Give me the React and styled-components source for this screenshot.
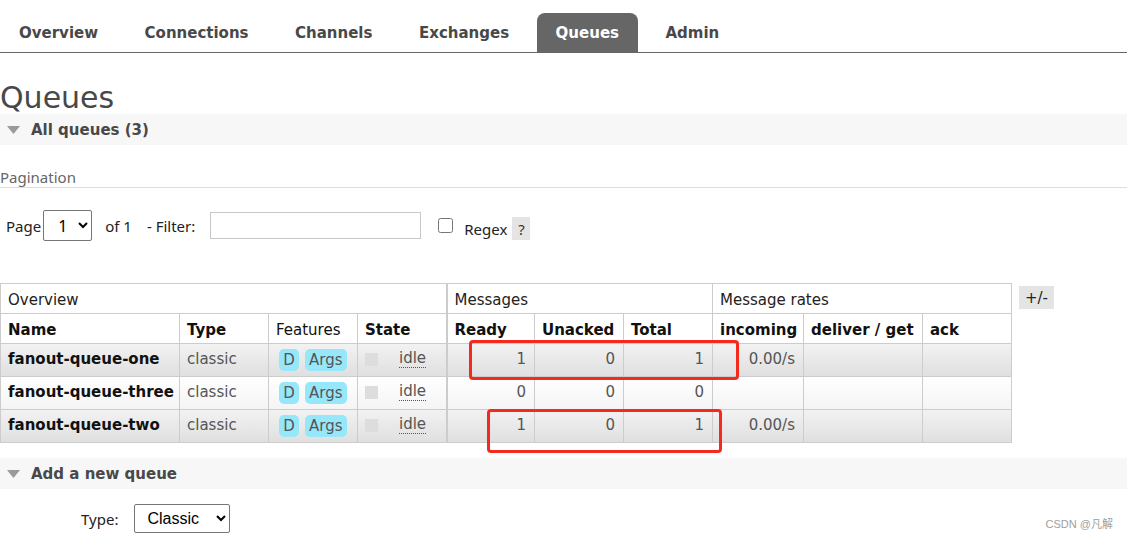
import React from 'react';
import styled, {createGlobalStyle} from 'styled-components';

// Global

const GlobalStyle = createGlobalStyle`
    body {
        margin: 0;
        font-family: "DejaVu Sans", Verdana, sans-serif;
        font-size: 15px;
        color: #484848;
        background: #fff;
    }
`

// Styled Components

const Page = styled.div`
    position: relative;
    width: 1127px;
    height: 540px;
    overflow: hidden;
`

const Nav = styled.nav`
    display: flex;
    gap: 8.5px;
    height: 39px;
    padding-top: 13px;
    border-bottom: 1px solid #666;
`

const Tab = styled.a`
    display: flex;
    align-items: center;
    padding: 0 19px;
    font-weight: bold;
    font-size: 15px;
    color: ${p => p.active ? '#fff' : '#484848'};
    background: ${p => p.active ? '#666' : 'transparent'};
    border-radius: 8px 8px 0 0;
    text-decoration: none;
`

const Title = styled.h1`
    margin: 29px 0 0;
    font-size: 30px;
    line-height: 32px;
    font-weight: normal;
    color: #484848;
`

const SectionHeader = styled.div`
    display: flex;
    align-items: center;
    height: 31px;
    margin-top: ${p => p.top || 0}px;
    padding-left: 7px;
    background: #f7f7f7;
    font-weight: bold;
    font-size: 15px;
    color: #484848;

    svg {
        margin-right: 11px;
    }
`

const Legend = styled.div`
    padding-top: 22px;
    font-family: "Noto Sans", "Open Sans", sans-serif;
    font-size: 15px;
    line-height: 20px;
    color: #666;
    border-bottom: 1px solid #ddd;
`

const Controls = styled.div`
    display: flex;
    align-items: center;
    height: 31px;
    margin-top: 22px;
    padding-left: 6px;
    font-family: "Noto Sans", "Open Sans", sans-serif;
    font-size: 15px;
    color: #222;
`

const Label = styled.span`
    margin-left: ${p => p.ml || 0}px;
    margin-top: ${p => p.mt || 0}px;
`

const Select = styled.select`
    box-sizing: border-box;
    width: ${p => p.w}px;
    height: ${p => p.h}px;
    margin-left: ${p => p.ml || 0}px;
    padding: 0 4px 0 ${p => p.pl || 8}px;
    font-family: ${p => p.arial ? '"Liberation Sans", Arial' : '"Noto Sans"'}, sans-serif;
    font-size: 16px;
    color: #000;
    background: #fff;
    border: 1px solid #767676;
    border-radius: 2px;
`

const TextInput = styled.input`
    box-sizing: border-box;
    width: 211px;
    height: 27px;
    margin-left: 15px;
    border: 1px solid #c8c8c8;
    border-radius: 0;
`

const CheckBox = styled.input`
    width: 15px;
    height: 15px;
    margin: 0 0 0 17px;
`

const HelpBox = styled.span`
    display: inline-flex;
    align-items: center;
    justify-content: center;
    width: 18px;
    height: 23px;
    margin-left: 5px;
    margin-top: 6px;
    background: #e4e4e4;
    color: #333;
`

const TableArea = styled.div`
    display: flex;
    align-items: flex-start;
    gap: 7px;
    margin-top: 42px;
`

const TableWrap = styled.div`
    position: relative;
`

const Table = styled.table`
    border-collapse: collapse;
    table-layout: fixed;
    width: 1011px;
    font-size: 15px;

    th, td {
        border: 1px solid #ccc;
        padding: 0 7px;
        text-align: left;
        white-space: nowrap;
        overflow: hidden;
    }

    thead tr {
        height: 30px;
    }

    thead th {
        padding-top: 2px;
    }

    tbody tr {
        height: 33px;
        background: linear-gradient(#f2f2f2, #dfdfdf);
    }

    tbody tr:nth-child(2) {
        background: linear-gradient(#ffffff, #f4f4f4);
    }

    tbody td {
        padding-bottom: 2px;
    }

    .group {
        border-left: 2px solid #ccc;
    }
`

const GroupTh = styled.th`
    font-weight: normal;
    color: #222;
`

const ColTh = styled.th`
    font-weight: ${p => p.light ? 'normal' : 'bold'};
    color: #111;
`

const NameCell = styled.td`
    font-weight: bold;
    color: #111;
`

const PlainCell = styled.td`
    color: #555;
`

const NumCell = styled.td`
    color: #555;
    text-align: right !important;
    padding-right: 8px !important;
`

const Badges = styled.div`
    display: flex;
    gap: 6px;
    margin-left: 3px;
    margin-top: 2px;
`

const Badge = styled.span`
    display: inline-flex;
    align-items: center;
    justify-content: center;
    height: 22px;
    padding: 0 ${p => p.wide ? 4 : 3}px;
    min-width: 14px;
    background: #97e7fb;
    border-radius: 5px;
    color: #555;
`

const StateBox = styled.div`
    display: flex;
    align-items: center;
`

const StateSquare = styled.span`
    width: 13px;
    height: 13px;
    background: #ddd;
    margin-right: 21px;
`

const Idle = styled.abbr`
    text-decoration: none;
    border-bottom: 1px dotted #555;
    color: #555;
    line-height: 17px;
`

const ToggleButton = styled.span`
    display: inline-flex;
    align-items: center;
    justify-content: center;
    width: 35px;
    height: 23px;
    margin-top: 3px;
    background: #e4e4e4;
    color: #222;
`

const Mark = styled.div`
    position: absolute;
    left: ${p => p.x}px;
    top: ${p => p.y}px;
    width: ${p => p.w}px;
    height: ${p => p.h}px;
    box-sizing: border-box;
    border: 3px solid #f52a1e;
    border-radius: 4px;
    pointer-events: none;
`

const TypeRow = styled.div`
    display: flex;
    align-items: center;
    margin-top: 15px;
    padding-left: 81px;
    font-family: "Noto Sans", "Open Sans", sans-serif;
    font-size: 15px;
    color: #222;
`

const Watermark = styled.div`
    position: absolute;
    right: 14px;
    bottom: 9px;
    font-family: "Liberation Sans", "Noto Sans CJK SC", sans-serif;
    font-size: 11px;
    color: #a0a0a0;
`

// Data

const tabs = ['Overview', 'Connections', 'Channels', 'Exchanges', 'Queues', 'Admin'];

const queues = [
    {name: 'fanout-queue-one', ready: 1, unacked: 0, total: 1, rate: '0.00/s'},
    {name: 'fanout-queue-three', ready: 0, unacked: 0, total: 0, rate: ''},
    {name: 'fanout-queue-two', ready: 1, unacked: 0, total: 1, rate: '0.00/s'},
];

const widths = [179, 89, 89, 89, 88, 89, 89, 91, 119, 89];

const Triangle = () => (
    <svg width="13" height="8" viewBox="0 0 13 8">
        <path d="M0 0 H13 L6.5 8 Z" fill="#9a9a9a"/>
    </svg>
)

// App

const App = () => (
    <Page>
        <GlobalStyle/>
        <Nav>
            {tabs.map(t => (
                <Tab key={t} active={t === 'Queues'}>{t}</Tab>
            ))}
        </Nav>
        <Title>Queues</Title>
        <SectionHeader>
            <Triangle/>
            All queues (3)
        </SectionHeader>
        <Legend>Pagination</Legend>
        <Controls>
            <Label>Page</Label>
            <Select w={49} h={31} ml={2} pl={10}>
                <option>1</option>
            </Select>
            <Label ml={13}>of 1</Label>
            <Label ml={15}>- Filter:</Label>
            <TextInput type="text"/>
            <CheckBox type="checkbox"/>
            <Label ml={11} mt={6}>Regex</Label>
            <HelpBox>?</HelpBox>
        </Controls>
        <TableArea>
            <TableWrap>
                <Table>
                    <colgroup>
                        {widths.map((w, i) => <col key={i} style={{width: w}}/>)}
                    </colgroup>
                    <thead>
                        <tr>
                            <GroupTh colSpan={4}>Overview</GroupTh>
                            <GroupTh colSpan={3} className="group">Messages</GroupTh>
                            <GroupTh colSpan={3}>Message rates</GroupTh>
                        </tr>
                        <tr>
                            <ColTh>Name</ColTh>
                            <ColTh>Type</ColTh>
                            <ColTh light>Features</ColTh>
                            <ColTh>State</ColTh>
                            <ColTh className="group">Ready</ColTh>
                            <ColTh>Unacked</ColTh>
                            <ColTh>Total</ColTh>
                            <ColTh>incoming</ColTh>
                            <ColTh>deliver / get</ColTh>
                            <ColTh>ack</ColTh>
                        </tr>
                    </thead>
                    <tbody>
                        {queues.map(q => (
                            <tr key={q.name}>
                                <NameCell>{q.name}</NameCell>
                                <PlainCell>classic</PlainCell>
                                <PlainCell>
                                    <Badges>
                                        <Badge>D</Badge>
                                        <Badge wide>Args</Badge>
                                    </Badges>
                                </PlainCell>
                                <PlainCell>
                                    <StateBox>
                                        <StateSquare/>
                                        <Idle>idle</Idle>
                                    </StateBox>
                                </PlainCell>
                                <NumCell className="group">{q.ready}</NumCell>
                                <NumCell>{q.unacked}</NumCell>
                                <NumCell>{q.total}</NumCell>
                                <NumCell>{q.rate}</NumCell>
                                <NumCell/>
                                <NumCell/>
                            </tr>
                        ))}
                    </tbody>
                </Table>
                <Mark x={469} y={57} w={270} h={40}/>
                <Mark x={487} y={126} w={235} h={44}/>
            </TableWrap>
            <ToggleButton>+/-</ToggleButton>
        </TableArea>
        <SectionHeader top={15}>
            <Triangle/>
            Add a new queue
        </SectionHeader>
        <TypeRow>
            <Label>Type:</Label>
            <Select w={96} h={29} ml={16} arial>
                <option>Classic</option>
            </Select>
        </TypeRow>
        <Watermark>CSDN @凡解</Watermark>
    </Page>
)

export default App;
